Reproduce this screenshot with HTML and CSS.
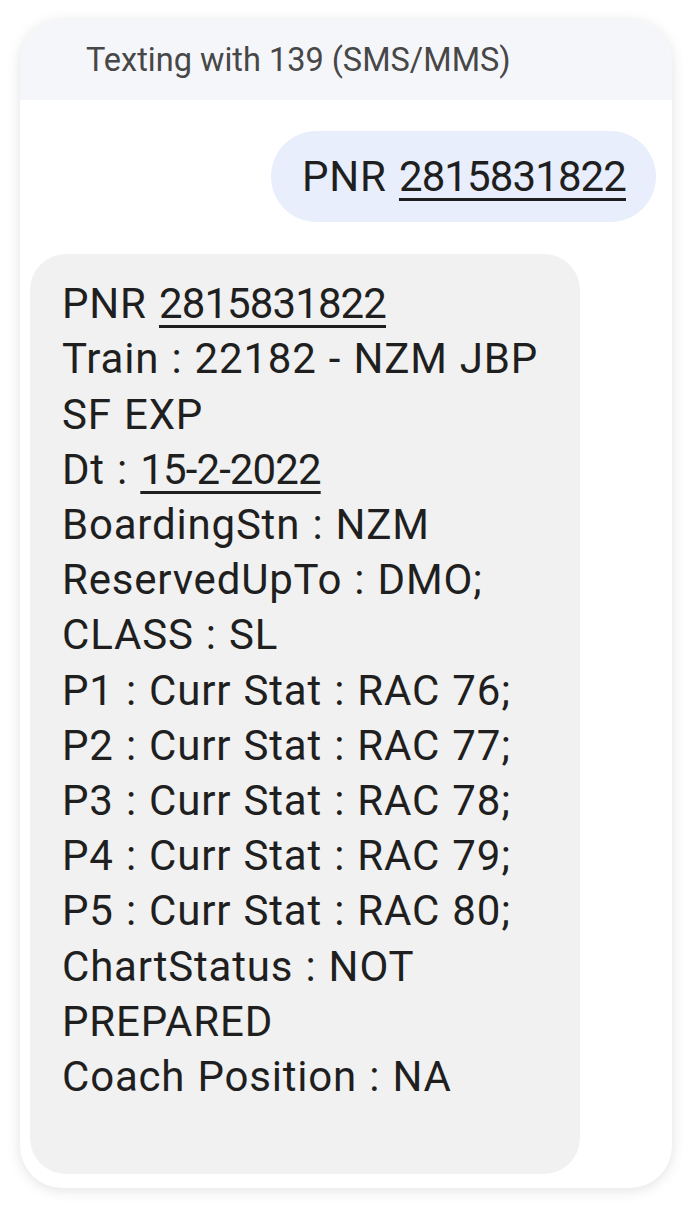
FILE: index.html
```html
<!DOCTYPE html>
<html lang="en">
<head>
<meta charset="utf-8">
<title>Texting with 139</title>
<link rel="stylesheet" href="styles.css">
</head>
<body>
<div class="card">
  <div class="header">Texting with 139 (SMS/MMS)</div>
  <div class="thread">
    <div class="row sent-row">
      <div class="bubble sent">PNR <span class="link">2815831822</span></div>
    </div>
    <div class="row recv-row">
      <div class="bubble recv"><div class="line">PNR <span class="link">2815831822</span></div><div class="line">Train : 22182 - NZM JBP SF EXP</div><div class="line">Dt : <span class="link">15-2-2022</span></div><div class="line">BoardingStn : NZM</div><div class="line">ReservedUpTo : DMO;</div><div class="line">CLASS : SL</div><div class="line">P1 : Curr Stat : RAC 76;</div><div class="line">P2 : Curr Stat : RAC 77;</div><div class="line">P3 : Curr Stat : RAC 78;</div><div class="line">P4 : Curr Stat : RAC 79;</div><div class="line">P5 : Curr Stat : RAC 80;</div><div class="line">ChartStatus : NOT PREPARED</div><div class="line">Coach Position : NA</div></div>
    </div>
  </div>
</div>
</body>
</html>
```

FILE: styles.css
```css
html, body {
  margin: 0;
  padding: 0;
  background: #ffffff;
}
body {
  padding: 20px;
  font-family: Roboto, "Noto Sans", sans-serif;
  color: #1f1f1f;
}
.card {
  width: 652px;
  height: 1168px;
  box-sizing: border-box;
  background: #ffffff;
  border-radius: 42px;
  box-shadow: 0 2px 14px rgba(0, 0, 0, 0.12);
  overflow: hidden;
  display: flex;
  flex-direction: column;
}
.header {
  height: 80px;
  background: #f5f6fa;
  display: flex;
  align-items: center;
  padding-left: 66px;
  font-size: 32.5px;
  color: #474747;
}
.thread {
  display: flex;
  flex-direction: column;
  gap: 32px;
  padding: 31px 16px 0 10px;
}
.row {
  display: flex;
}
.sent-row {
  justify-content: flex-end;
}
.bubble {
  font-size: 42px;
  line-height: 55.2px;
  letter-spacing: 0.8px;
  word-spacing: 1px;
  color: #1f1f1f;
}
.sent {
  background: #e8eefb;
  border-radius: 46px;
  padding: 18px 30px 18px 31px;
}
.recv {
  width: 550px;
  box-sizing: border-box;
  background: #f1f1f1;
  border-radius: 36px;
  padding: 22px 30px 70px 32px;
}
.link {
  letter-spacing: -0.9px;
  text-decoration: underline;
  text-decoration-thickness: 3px;
  text-underline-offset: 7px;
}
```
